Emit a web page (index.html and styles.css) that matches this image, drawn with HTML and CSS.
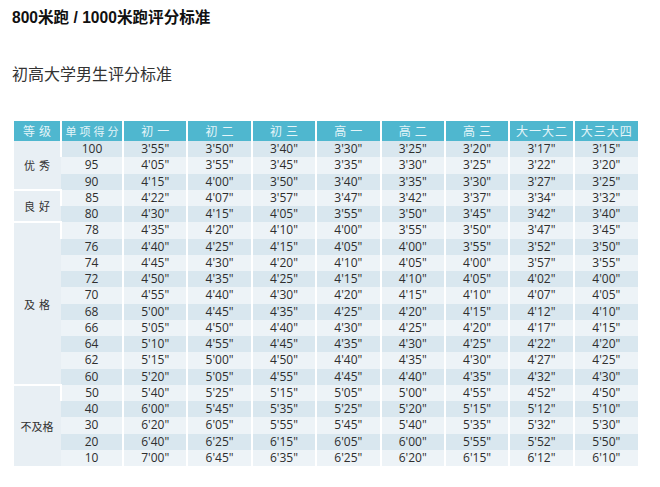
FILE: index.html
```html
<!DOCTYPE html>
<html lang="zh">
<head>
<meta charset="utf-8">
<link rel="stylesheet" href="styles.css">
</head>
<body>
<h1 class="title">800米跑 / 1000米跑评分标准</h1>
<p class="subtitle">初高大学男生评分标准</p>
<table class="score">
<colgroup>
<col class="c-grade"><col class="c-score">
<col class="c-val"><col class="c-val"><col class="c-val"><col class="c-val"><col class="c-val"><col class="c-val"><col class="c-val"><col class="c-val">
</colgroup>
<thead>
<tr><th class="sp">等级</th><th class="sp2">单项得分</th><th class="sp">初一</th><th class="sp">初二</th><th class="sp">初三</th><th class="sp">高一</th><th class="sp">高二</th><th class="sp">高三</th><th class="sp1">大一大二</th><th class="sp1">大三大四</th></tr>
</thead>
<tbody>
<tr class="d"><td class="g sp" rowspan="3">优秀</td><td>100</td><td>3'55"</td><td>3'50"</td><td>3'40"</td><td>3'30"</td><td>3'25"</td><td>3'20"</td><td>3'17"</td><td>3'15"</td></tr>
<tr class="l"><td>95</td><td>4'05"</td><td>3'55"</td><td>3'45"</td><td>3'35"</td><td>3'30"</td><td>3'25"</td><td>3'22"</td><td>3'20"</td></tr>
<tr class="d"><td>90</td><td>4'15"</td><td>4'00"</td><td>3'50"</td><td>3'40"</td><td>3'35"</td><td>3'30"</td><td>3'27"</td><td>3'25"</td></tr>
<tr class="l"><td class="g sp" rowspan="2">良好</td><td>85</td><td>4'22"</td><td>4'07"</td><td>3'57"</td><td>3'47"</td><td>3'42"</td><td>3'37"</td><td>3'34"</td><td>3'32"</td></tr>
<tr class="d"><td>80</td><td>4'30"</td><td>4'15"</td><td>4'05"</td><td>3'55"</td><td>3'50"</td><td>3'45"</td><td>3'42"</td><td>3'40"</td></tr>
<tr class="l"><td class="g sp" rowspan="10">及格</td><td>78</td><td>4'35"</td><td>4'20"</td><td>4'10"</td><td>4'00"</td><td>3'55"</td><td>3'50"</td><td>3'47"</td><td>3'45"</td></tr>
<tr class="d"><td>76</td><td>4'40"</td><td>4'25"</td><td>4'15"</td><td>4'05"</td><td>4'00"</td><td>3'55"</td><td>3'52"</td><td>3'50"</td></tr>
<tr class="l"><td>74</td><td>4'45"</td><td>4'30"</td><td>4'20"</td><td>4'10"</td><td>4'05"</td><td>4'00"</td><td>3'57"</td><td>3'55"</td></tr>
<tr class="d"><td>72</td><td>4'50"</td><td>4'35"</td><td>4'25"</td><td>4'15"</td><td>4'10"</td><td>4'05"</td><td>4'02"</td><td>4'00"</td></tr>
<tr class="l"><td>70</td><td>4'55"</td><td>4'40"</td><td>4'30"</td><td>4'20"</td><td>4'15"</td><td>4'10"</td><td>4'07"</td><td>4'05"</td></tr>
<tr class="d"><td>68</td><td>5'00"</td><td>4'45"</td><td>4'35"</td><td>4'25"</td><td>4'20"</td><td>4'15"</td><td>4'12"</td><td>4'10"</td></tr>
<tr class="l"><td>66</td><td>5'05"</td><td>4'50"</td><td>4'40"</td><td>4'30"</td><td>4'25"</td><td>4'20"</td><td>4'17"</td><td>4'15"</td></tr>
<tr class="d"><td>64</td><td>5'10"</td><td>4'55"</td><td>4'45"</td><td>4'35"</td><td>4'30"</td><td>4'25"</td><td>4'22"</td><td>4'20"</td></tr>
<tr class="l"><td>62</td><td>5'15"</td><td>5'00"</td><td>4'50"</td><td>4'40"</td><td>4'35"</td><td>4'30"</td><td>4'27"</td><td>4'25"</td></tr>
<tr class="d"><td>60</td><td>5'20"</td><td>5'05"</td><td>4'55"</td><td>4'45"</td><td>4'40"</td><td>4'35"</td><td>4'32"</td><td>4'30"</td></tr>
<tr class="l"><td class="g" rowspan="5">不及格</td><td>50</td><td>5'40"</td><td>5'25"</td><td>5'15"</td><td>5'05"</td><td>5'00"</td><td>4'55"</td><td>4'52"</td><td>4'50"</td></tr>
<tr class="d"><td>40</td><td>6'00"</td><td>5'45"</td><td>5'35"</td><td>5'25"</td><td>5'20"</td><td>5'15"</td><td>5'12"</td><td>5'10"</td></tr>
<tr class="l"><td>30</td><td>6'20"</td><td>6'05"</td><td>5'55"</td><td>5'45"</td><td>5'40"</td><td>5'35"</td><td>5'32"</td><td>5'30"</td></tr>
<tr class="d"><td>20</td><td>6'40"</td><td>6'25"</td><td>6'15"</td><td>6'05"</td><td>6'00"</td><td>5'55"</td><td>5'52"</td><td>5'50"</td></tr>
<tr class="l"><td>10</td><td>7'00"</td><td>6'45"</td><td>6'35"</td><td>6'25"</td><td>6'20"</td><td>6'15"</td><td>6'12"</td><td>6'10"</td></tr>
</tbody>
</table>
</body>
</html>
```
FILE: styles.css
```css
html, body {
  margin: 0;
  padding: 0;
  background: #fff;
}
body {
  padding: 0 12px;
  font-family: "Liberation Sans", Arial, "Noto Sans CJK SC", sans-serif;
  color: #222;
}
.title {
  margin: 0;
  padding-top: 8px;
  font-size: 15.6px;
  line-height: 19px;
  font-weight: bold;
  color: #111;
}
.subtitle {
  margin: 0;
  padding-top: 38px;
  font-size: 16px;
  line-height: 20px;
  color: #333;
}
.score {
  margin: 36px 0 0 2px;
  border-collapse: collapse;
  table-layout: fixed;
  width: 624px;
  font-family: "Open Sans", "Noto Sans CJK SC", sans-serif;
}
.c-grade { width: 47px; }
.c-score { width: 62px; }
.c-val { width: 64.375px; }
.score th {
  height: 20px;
  padding: 0;
  background: #4fb7cf;
  color: #e4f5f9;
  font-family: "Noto Sans CJK SC", sans-serif;
  font-weight: normal;
  font-size: 12px;
  line-height: 20px;
  border-left: 2px solid #fff;
  text-align: center;
}
.score th:first-child { border-left: 0; }
.score .sp { letter-spacing: 4px; text-indent: 4px; }
.score .sp1 { letter-spacing: 1px; text-indent: 1px; }
.score .sp2 { letter-spacing: 3px; text-indent: 3px; font-size: 11px; }
.score td {
  height: 16.25px;
  padding: 0;
  font-size: 12px;
  line-height: 16px;
  text-align: center;
  color: #2e2e2e;
  border-left: 2px solid #fff;
}
.score td:first-child { border-left: 0; }
.score tr.d td { background: #d9e7ef; }
.score tr.l td { background: #edf3f7; }
.score tr td.g {
  background: #e8eff4;
  border-top: 2px solid #fff;
  font-family: "Noto Sans CJK SC", sans-serif;
  font-size: 11px;
  color: #333;
}
.score tbody tr:first-child td.g { border-top: 0; }
```
